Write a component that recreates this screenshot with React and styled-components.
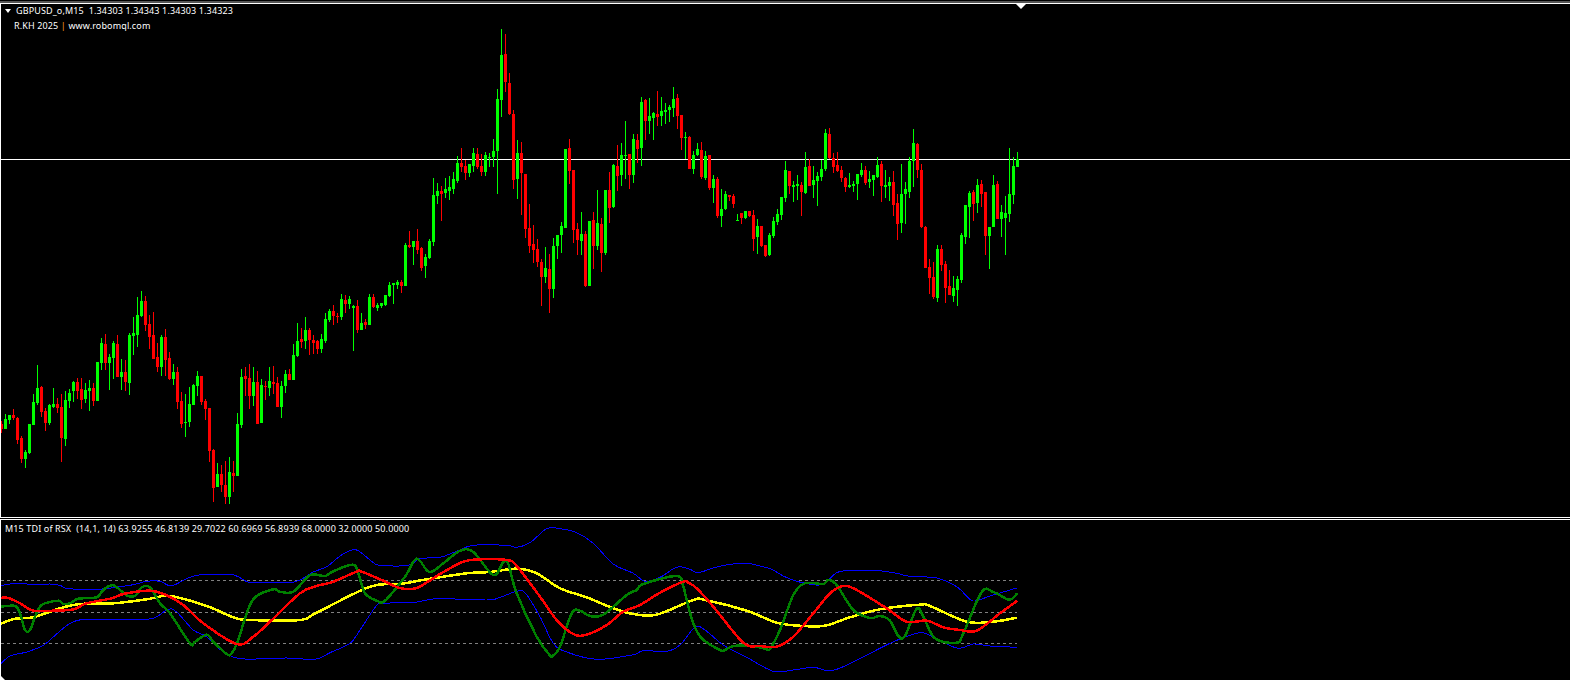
import React from "react";
import styled, { createGlobalStyle } from "styled-components";

const Global = createGlobalStyle`
  html, body { margin: 0; padding: 0; background: #000; overflow: hidden; }
  #root { width: 1570px; height: 680px; }
`;

const Terminal = styled.div`
  width: 1570px;
  height: 680px;
  background: #000;
  display: flex;
  flex-direction: column;
  font-family: "Noto Sans", "Liberation Sans", sans-serif;
  font-size: 9px;
  letter-spacing: 0.13px;
  color: #fff;
`;

const TopEdge = styled.div`
  height: 2px;
  margin-top: 1px;
  background: #555;
  border-bottom: 1px solid #fff;
  flex: none;
  position: relative;
`;

const ShiftMarker = styled.div`
  position: absolute;
  left: 1016px;
  top: 3px;
  width: 0;
  height: 0;
  border-left: 5px solid transparent;
  border-right: 5px solid transparent;
  border-top: 5px solid #fff;
`;

const Pane = styled.section`
  position: relative;
  flex: none;
  height: ${(p) => p.$height}px;
  border-left: 1px solid #fff;
  overflow: hidden;
`;

const MainPane = styled(Pane)`
  border-bottom: 1px solid #fff;
  margin-bottom: 1px;
`;

const SubPane = styled(Pane)`
  border-top: 1px solid #fff;
`;

const ChartSvg = styled.svg`
  display: block;
  shape-rendering: crispEdges;
`;

const Legend = styled.div`
  position: absolute;
  left: 4px;
  top: 1px;
  display: flex;
  flex-direction: column;
  gap: 4px;
  pointer-events: none;
`;

const LegendRow = styled.div`
  display: flex;
  align-items: center;
  height: 11px;
  line-height: 11px;
  white-space: pre;
  padding-left: ${(p) => p.$indent || 0}px;
`;

const Caret = styled.span`
  width: 0;
  height: 0;
  margin-right: 5px;
  border-left: 3px solid transparent;
  border-right: 3px solid transparent;
  border-top: 4px solid #fff;
`;

const Pipe = styled.span`
  color: #ff9a1f;
`;

const IndicatorLabel = styled.div`
  position: absolute;
  left: 4px;
  top: 3px;
  height: 11px;
  line-height: 11px;
  white-space: pre;
`;

const CornerTick = styled.div`
  position: absolute;
  left: -1px;
  bottom: 0;
  width: 0;
  height: 0;
  border-left: 5px solid #fff;
  border-top: 5px solid transparent;
`;

// Candles read from the chart: colour, wick top, wick bottom, body top, body bottom (at 3x scale).
const seg1 = [
  ["R",423,458,432,447],["G",402,447,417,447],["G",405,432,405,420],["R",387,420,405,414],["R",411,491,414,479],
  ["R",468,548,474,537],["G",510,564,516,537],["G",432,522,432,519],["G",342,435,366,435],["G",255,375,324,369],
  ["R",318,410,321,396],["R",384,452,393,429],["G",372,435,375,429],["G",324,384,372,381],["R",354,399,372,384],
  ["R",342,546,381,474],["G",333,498,360,477],["G",327,384,339,363],["G",303,366,306,333],["R",294,357,306,333],
  ["R",294,387,327,360],["G",309,369,330,357],["G",300,393,324,333],["R",309,378,324,363],["G",246,363,246,363],
  ["G",174,270,189,249],["R",162,270,192,249],["G",222,330,231,249],["G",183,297,189,234],["R",165,291,192,291],
  ["G",237,330,276,291],["R",240,333,276,306],["G",159,345,165,309],["G",111,225,159,168],["G",51,201,105,165],
  ["G",33,111,63,108],["R",48,153,63,135],["R",105,207,132,171],["R",96,237,165,237],["R",189,276,231,261],
  ["G",165,288,171,261],["R",147,288,171,240],["R",216,300,234,297],["G",252,315,276,297],["R",261,387,276,366],
  ["R",336,444,363,432],["G",342,471,426,429],["G",321,441,372,426],["G",312,375,315,375],["G",273,348,288,318],
  ["R",288,375,288,366],["R",357,420,363,387],["R",384,546,384,513],["R",507,666,510,624],["G",549,621,582,621],
  ["R",555,636,582,615],["R",543,672,615,651],["G",531,672,576,651],["R",543,636,579,588],["G",399,588,432,588],
  ["G",267,444,291,435],["R",261,348,288,297],["R",252,387,294,348],["G",261,378,306,348],["R",273,432,306,432],
  ["G",297,429,315,429],["R",303,360,318,321],["G",261,348,303,324],["R",258,342,306,312],["R",291,381,309,381],
  ["G",303,414,318,381],["G",270,339,282,318],["R",267,300,282,300],["G",192,300,225,300],["G",129,231,183,228],
  ["R",144,204,177,186],["G",111,207,150,183],["R",144,225,150,180],["R",165,222,180,189],["R",180,222,183,207],
  ["G",162,219,177,207],["G",99,189,117,183],["G",87,126,93,120],["R",75,135,93,108],["R",99,129,108,111],
];
const seg2 = [
  ["G",822,900,837,891],["R",825,879,840,852],["G",828,867,837,852],["G",855,993,858,864],["R",840,939,858,930],
  ["G",879,930,909,930],["R",897,927,906,915],["G",822,915,831,915],["R",822,864,831,861],["G",849,873,855,864],
  ["G",849,864,849,858],["G",825,858,825,855],["G",786,831,795,828],["G",789,852,789,795],["G",780,807,786,795],
  ["R",780,819,786,798],["G",669,798,675,798],["R",633,684,675,681],["G",663,735,663,681],["R",627,702,663,690],
  ["R",681,753,684,744],["G",702,774,711,738],["G",657,717,663,714],["G",474,678,525,666],["G",489,552,513,528],
  ["R",498,603,513,522],["G",474,534,507,519],["G",468,540,501,513],["G",456,522,477,507],["G",408,489,429,483],
  ["R",384,456,429,441],["R",420,480,438,459],["G",432,471,432,459],["G",384,456,399,438],["R",384,447,402,441],
  ["R",402,468,438,456],["G",396,468,405,456],["G",399,441,411,414],["G",357,441,393,411],["G",207,522,237,393],
  ["G",27,291,105,240],["R",42,216,102,186],["R",159,285,189,282],["R",270,507,282,480],["G",360,537,399,477],
  ["R",366,585,399,459],["R",462,654,462,627],["R",552,699,624,678],["R",615,729,672,690],["R",657,741,687,726],
  ["R",717,858,726,771],["G",681,789,744,771],["R",702,879,747,807],["G",654,834,678,807],["G",645,717,645,678],
  ["G",606,699,618,645],["G",387,624,387,624],["R",357,492,384,453],["R",450,669,450,630],["R",609,705,627,660],
  ["G",576,705,642,663],["R",633,801,642,798],["G",603,798,603,798],["R",576,747,600,678],["G",510,690,609,678],
  ["R",594,756,612,699],["G",510,705,510,699],["R",456,609,510,564],["G",432,564,435,561],["R",375,513,438,468],
  ["G",369,498,405,465],["G",303,477,405,408],["R",402,507,402,465],["G",342,489,357,465],["R",342,429,360,387],
  ["G",231,438,246,384],["R",237,360,240,303],["G",234,342,288,303],["G",276,360,279,294],["R",213,318,282,291],
  ["G",231,318,273,288],["G",249,312,270,276],["G",255,306,261,270],["G",201,291,237,264],["R",222,327,234,288],
];
const seg3 = [
  ["R",105,210,105,174],["G",156,237,171,174],["R",168,267,171,267],["G",213,282,225,267],["G",189,228,207,225],
  ["R",186,297,210,291],["G",213,300,228,294],["R",225,330,225,324],["G",285,369,297,324],["R",291,414,297,408],
  ["G",327,441,387,408],["G",333,390,342,387],["R",345,363,345,351],["R",342,384,348,372],["G",402,423,420,423],
  ["R",399,432,399,414],["G",393,417,393,414],["R",393,411,393,408],["R",390,513,405,477],["G",417,522,438,471],
  ["R",438,501,438,498],["R",495,531,495,528],["G",459,528,465,525],["G",411,474,423,468],["G",387,435,402,426],
  ["G",351,420,351,405],["G",243,366,270,354],["R",273,342,273,318],["G",303,366,315,321],["G",285,360,312,318],
  ["R",306,408,315,336],["G",216,342,261,339],["R",237,318,258,318],["G",258,354,300,315],["G",276,378,288,303],
  ["G",240,303,267,291],["G",147,273,159,267],["R",144,237,162,234],["R",219,279,234,261],["R",216,276,255,273],
  ["R",258,306,270,294],["R",291,336,294,321],["G",279,324,315,321],["G",303,336,312,318],["G",282,360,282,312],
  ["G",249,291,270,285],["R",258,315,270,309],["G",273,324,297,306],["G",285,348,285,300],["G",231,294,255,291],
  ["R",243,366,252,318],["G",270,354,315,321],["G",291,363,306,318],["R",273,408,306,375],["R",342,480,369,432],
  ["G",252,459,342,429],["G",306,432,327,342],["G",231,354,243,336],["G",147,321,189,243],["R",189,294,192,270],
  ["R",252,444,270,441],["R",438,564,441,564],["R",537,642,561,594],["R",546,657,591,651],["G",495,666,507,654],
  ["R",495,573,507,555],["R",543,669,552,624],["R",570,645,618,645],["G",588,666,624,648],["G",588,678,597,630],
  ["G",459,609,465,600],["G",375,492,375,471],["G",333,474,339,381],["R",330,423,336,372],["G",297,399,315,369],
  ["R",300,381,312,342],["R",336,525,336,468],["G",441,567,441,468],["G",285,441,315,441],["R",303,417,312,417],
  ["G",375,471,396,417],["G",348,525,399,414],["G",205,426,342,402],["G",231,372,258,345],["G",216,261,237,261],
];

const candles = [
  ...seg1.map((c) => [c, 280]),
  ...seg2.map((c) => [c, 20]),
  ...seg3.map((c) => [c, 80]),
].map(([[color, wickTop, wickBottom, bodyTop, bodyBottom], y0], i) => ({
  color: color === "G" ? "#00ff00" : "#ff0000",
  x: 4 * i,
  wickTop: Math.round(y0 + wickTop / 3),
  wickBottom: Math.round(y0 + wickBottom / 3),
  bodyTop: Math.round(y0 + bodyTop / 3),
  bodyBottom: Math.round(y0 + bodyBottom / 3),
}));

// Joins the three sampled stretches of a line and smooths them into a cubic path.
const stitch = (a, b, c) => {
  const pts = [
    ...a.map(([x, y]) => [x / 3, y]).filter(([x]) => x <= 345),
    ...b.map(([x, y]) => [340 + x / 3, y]).filter(([x]) => x > 345 && x <= 685),
    ...c.map(([x, y]) => [680 + x / 3, y]).filter(([x]) => x > 685),
  ].map(([x, y]) => [x, 510 + y / 3]);
  const f = (n) => n.toFixed(1);
  let d = `M${f(pts[0][0])} ${f(pts[0][1])}`;
  for (let i = 0; i < pts.length - 1; i++) {
    const p0 = pts[Math.max(0, i - 1)];
    const p1 = pts[i];
    const p2 = pts[i + 1];
    const p3 = pts[Math.min(pts.length - 1, i + 2)];
    const c1x = p1[0] + (p2[0] - p0[0]) / 6;
    const c1y = p1[1] + (p2[1] - p0[1]) / 6;
    const c2x = p2[0] - (p3[0] - p1[0]) / 6;
    const c2y = p2[1] - (p3[1] - p1[1]) / 6;
    d += `C${f(c1x)} ${f(c1y)} ${f(c2x)} ${f(c2y)} ${f(p2[0])} ${f(p2[1])}`;
  }
  return d;
};

const upperBand = stitch(
  [[0,228],[30,222],[80,222],[110,224],[150,222],[180,226],[205,236],[290,238],[340,233],[400,224],[440,214],[480,214],[505,226],[525,224],[560,206],[590,196],[640,193],[690,193],[715,200],[745,216],[800,218],[870,218],[900,210],[940,186],[980,170],[1020,138],[1050,124]],
  [[0,135],[30,122],[55,122],[100,158],[120,166],[205,166],[240,146],[300,142],[350,124],[400,106],[500,106],[530,112],[570,98],[620,56],[660,56],[710,68],[760,100],[820,162],[880,190],[915,214],[960,202],[1000,176],[1020,170],[1050,180]],
  [[0,170],[30,178],[55,188],[100,174],[150,163],[200,160],[240,168],[275,178],[310,198],[350,214],[400,224],[430,222],[470,188],[505,182],[595,182],[650,190],[690,199],[770,204],[830,230],[870,268],[890,272],[930,258],[970,246],[1010,234]]
);
const lowerBand = stitch(
  [[0,464],[30,438],[80,426],[130,406],[170,372],[210,340],[250,328],[340,330],[440,328],[470,320],[505,298],[530,306],[580,360],[620,380],[660,418],[720,446],[860,444],[945,448],[990,428],[1050,400]],
  [[0,418],[30,400],[60,360],[110,286],[130,280],[230,276],[290,266],[440,270],[480,262],[530,244],[555,248],[600,320],[640,400],[680,426],[770,448],[880,434],[910,422],[980,424],[1020,405],[1050,368]],
  [[0,400],[45,352],[75,360],[130,405],[200,442],[280,484],[340,480],[400,472],[470,478],[630,400],[710,370],[740,372],[830,414],[880,402],[930,408],[1010,412]]
);
const rsiLine = stitch(
  [[0,290],[45,288],[60,310],[75,360],[90,360],[105,320],[125,285],[175,272],[190,282],[210,280],[235,266],[290,262],[310,240],[340,226],[380,256],[405,258],[425,232],[450,232],[480,280],[510,310],[570,400],[585,395],[620,374],[640,395],[680,432],[695,430],[715,390],[740,310],[765,262],[820,238],[840,245],[880,245],[930,196],[975,198],[1000,184],[1050,164]],
  [[0,172],[38,164],[55,190],[75,250],[110,272],[135,272],[195,200],[230,146],[268,186],[310,160],[360,122],[400,126],[460,195],[490,156],[505,162],[530,250],[590,380],[630,436],[640,436],[660,410],[695,310],[720,302],[750,318],[790,314],[860,255],[890,240],[910,222],[1010,198],[1030,230],[1050,300]],
  [[0,218],[20,270],[40,340],[65,385],[120,420],[135,420],[160,408],[215,408],[255,416],[270,416],[300,360],[340,255],[375,220],[430,222],[445,210],[470,225],[520,300],[570,324],[600,318],[630,332],[655,378],[675,378],[710,296],[730,320],[765,385],[830,398],[850,370],[905,246],[940,246],[980,267],[995,267],[1012,250]]
);
const signalLine = stitch(
  [[0,264],[25,264],[60,280],[100,302],[160,302],[220,298],[260,280],[335,265],[370,252],[450,242],[500,256],[550,285],[610,340],[710,402],[760,380],[810,335],[900,250],[950,228],[1000,215],[1050,192]],
  [[0,205],[50,185],[65,185],[130,212],[180,234],[230,234],[300,192],[370,155],[420,148],[500,150],[530,168],[600,260],[650,330],[700,372],[740,374],[800,345],[850,305],[900,285],[960,248],[1030,215],[1050,215]],
  [[0,215],[25,218],[50,235],[100,290],[190,398],[240,408],[290,410],[340,380],[400,310],[450,250],[490,228],[530,240],[620,295],[680,335],[740,332],[790,352],[840,360],[890,362],[960,310],[1012,272]]
);
const marketBase = stitch(
  [[0,342],[45,326],[100,322],[180,295],[240,282],[340,280],[440,268],[510,258],[620,288],[700,322],[750,330],[900,330],[950,308],[1050,260]],
  [[0,276],[90,230],[180,222],[260,208],[380,190],[450,186],[530,176],[590,190],[660,235],[740,262],[820,295],[880,312],[950,314],[1050,270]],
  [[0,285],[40,270],[75,270],[200,302],[290,338],[370,348],[435,347],[510,322],[600,298],[720,284],[750,288],[860,335],[940,335],[1012,323]]
);

const CandleChart = () => (
  <ChartSvg width="1569" height="513" viewBox="1 4 1569 513">
    <line x1="0" x2="1570" y1="159.5" y2="159.5" stroke="#fff" />
    {candles.map((c) => (
      <g key={c.x} fill={c.color}>
        <rect x={c.x + 1} y={c.wickTop} width="1" height={Math.max(1, c.wickBottom - c.wickTop)} />
        <rect x={c.x} y={c.bodyTop} width="3" height={Math.max(1, c.bodyBottom - c.bodyTop)} />
      </g>
    ))}
  </ChartSvg>
);

const IndicatorChart = () => (
  <ChartSvg width="1569" height="160" viewBox="1 520 1569 160">
    {[580.5, 612.5, 643.5].map((y) => (
      <line key={y} x1="1" x2="1017" y1={y} y2={y} stroke="#808080" strokeDasharray="3 3" />
    ))}
    <g fill="none">
      <path d={upperBand} stroke="#0000ff" strokeWidth="1" />
      <path d={lowerBand} stroke="#0000ff" strokeWidth="1" />
      <path d={marketBase} stroke="#ffff00" strokeWidth="2.5" />
      <path d={rsiLine} stroke="#008000" strokeWidth="2.5" />
      <path d={signalLine} stroke="#ff0000" strokeWidth="2.5" />
    </g>
  </ChartSvg>
);

export default function App() {
  return (
    <Terminal>
      <Global />
      <TopEdge>
        <ShiftMarker />
      </TopEdge>
      <MainPane $height={513}>
        <CandleChart />
        <Legend>
          <LegendRow>
            <Caret />
            {"GBPUSD_o,M15  1.34303 1.34343 1.34303 1.34323"}
          </LegendRow>
          <LegendRow $indent={9}>
            R.KH 2025 <Pipe>|</Pipe> www.robomql.com
          </LegendRow>
        </Legend>
      </MainPane>
      <SubPane $height={160}>
        <IndicatorChart />
        <IndicatorLabel>
          {"M15 TDI of RSX  (14,1, 14) 63.9255 46.8139 29.7022 60.6969 56.8939 68.0000 32.0000 50.0000"}
        </IndicatorLabel>
        <CornerTick />
      </SubPane>
    </Terminal>
  );
}
